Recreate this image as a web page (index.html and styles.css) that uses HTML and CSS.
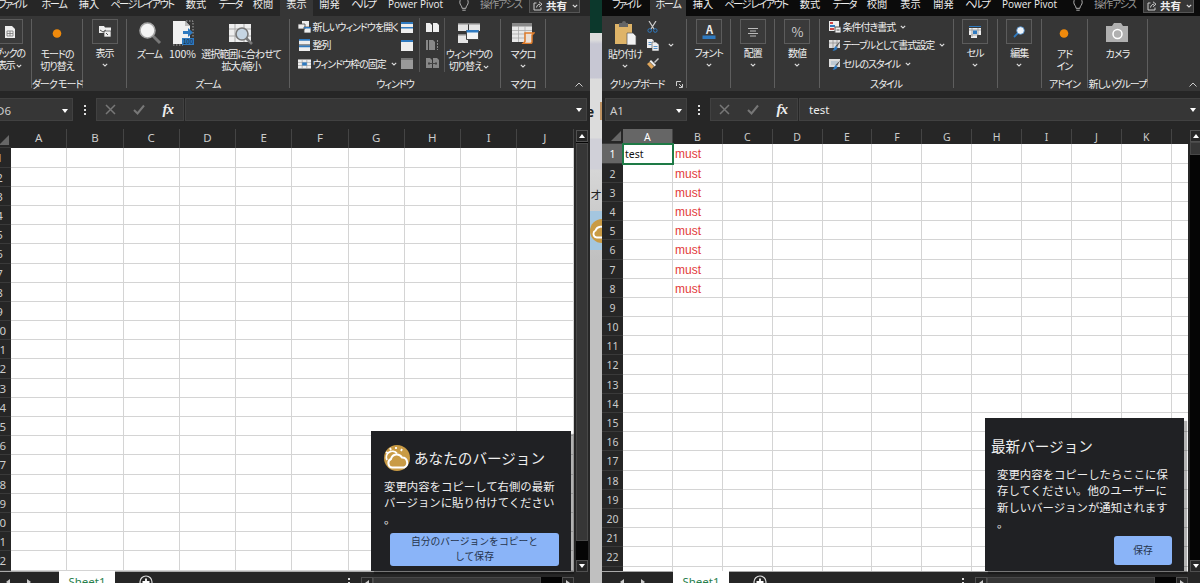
FILE: index.html
```html
<!DOCTYPE html>
<html lang="ja">

<head>
    <meta charset="UTF-8">
    <title>バージョンの比較</title>
    <link rel="stylesheet" href="styles.css">
    <script src="script.js"></script>
</head>

<body>
    <svg class="defs">
        <symbol id="chev" viewBox="0 0 6 4"><path d="M.8.8 3 3 5.2.8" fill="none" stroke="#ddd" stroke-width="1.1"/></symbol>
        <symbol id="bulb" viewBox="0 0 12 16"><path d="M4 11C4 8.500 1.500 7.500 1.500 4.500a4.500 4.500 0 0 1 9 0C10.500 7.500 8 8.500 8 11zM4.200 13h3.600" fill="none" stroke="#bbb"/></symbol>
        <symbol id="share" viewBox="0 0 10 10"><path d="M3.500 2H1v7h7V6.500M3.500 6.500C4 4 5.500 3.200 7 3.200M6 .8l3 2.400-3 2.500" fill="none" stroke="#ccc"/></symbol>
        <symbol id="dot" viewBox="0 0 24 24"><circle cx="12" cy="12.500" r="4.300" fill="#ef8a0c"/></symbol>
        <symbol id="cells" viewBox="0 0 14 10"><path fill="#eee" d="M0 0h14v10H0z"/><path d="M0 3.300h14M0 6.600h14M4.500 0v10M9.500 0v10" stroke="#9a9a9a" stroke-width=".7"/></symbol>
    </svg>

    <div class="backdrop">
        <div class="strip-green"></div>
        <div class="strip-text strip-e">e<i></i></div>
        <div class="strip-text strip-o">オ</div>
        <div class="strip-item">
            <svg width="24" height="24" viewBox="0 0 26 26"><circle cx="13" cy="13" r="13" fill="#c99b45"/><path d="M7 20a4 4 0 0 1-1-7.500 6 6 0 0 1 11-1 5 5 0 0 1 3 8.500z" fill="#c99b45" stroke="#fff" stroke-width="2"/></svg>
        </div>
    </div>

    <!-- 左のウィンドウ -->
    <div class="window window-left">
        <div class="tabs">
            <span>ファイル</span><span>ホーム</span><span>挿入</span><span>ページ レイアウト</span><span>数式</span><span>データ</span><span>校閲</span><span class="active">表示</span><span>開発</span><span>ヘルプ</span><span class="latin">Power Pivot</span>
            <span><svg width="12" height="15"><use href="#bulb"/></svg></span><span class="assist">操作アシス</span>
            <div class="share"><svg width="10" height="10"><use href="#share"/></svg><b>共有</b><svg class="chev"><use href="#chev"/></svg></div>
        </div>
        <div class="ribbon">
            <div class="group g-book">
                <div class="body"><div class="big boxed">
                    <div class="icon"><svg width="12" height="14" viewBox="0 0 12 14"><path d="M1 1h7l3 3v9H1z" fill="#eee"/><path d="M3 6h6v5H3zM3 8.500h6M6 6v5" fill="none" stroke="#777" stroke-width=".8"/></svg></div>
                    <span>ブックの<br>表示 <svg class="chev"><use href="#chev"/></svg></span>
                </div></div>
            </div>
            <div class="group g-dark">
                <div class="body"><div class="big">
                    <div class="icon"><svg width="24" height="24"><use href="#dot"/></svg></div>
                    <span>モードの<br>切り替え</span>
                </div></div>
                <div class="caption">ダーク モード</div>
            </div>
            <div class="group g-show">
                <div class="body"><div class="big boxed">
                    <div class="icon"><svg width="14" height="13" viewBox="0 0 14 13"><path d="M1 1h5l1 1.500h6V6H9v2H1z" fill="#eee"/><path d="M6 6h7v6H6z" fill="#eee" stroke="#444" stroke-width=".7"/><path d="m2 5 3 2 3-2M8 8l2 2" fill="none" stroke="#555"/></svg></div>
                    <span>表示</span><svg class="chev"><use href="#chev"/></svg>
                </div></div>
            </div>
            <div class="group g-zoom">
                <div class="body">
                    <div class="big b-zoom">
                        <div class="icon"><svg width="24" height="24" viewBox="0 0 24 24"><path d="m15 15 7 7" stroke="#777" stroke-width="3"/><circle cx="9.500" cy="9.500" r="7.500" fill="#f4f4f4" stroke="#a5a5a5" stroke-width="1.600"/></svg></div>
                        <span>ズーム</span>
                    </div>
                    <div class="big b-full">
                        <div class="icon"><svg width="24" height="26" viewBox="0 0 24 26"><path d="M2 1h12l5 5v18H2z" fill="#f1f1f1"/><path d="M14 1v5h5" fill="#bbb"/><path d="M15 1h7v17M2 25h10" fill="none" stroke="#aaa" stroke-dasharray="1.500 1.500"/><path d="M12 11h5V8l5 4.500-5 4.500v-3h-5zM11 18h12v7H11z" fill="#2f7ac0"/><text x="12" y="24" font-size="6" letter-spacing="0" fill="#123">100</text></svg></div>
                        <span class="pct">100%</span>
                    </div>
                    <div class="big b-fit">
                        <div class="icon"><svg width="26" height="24" viewBox="0 0 26 24"><path d="M1 3h22v18H1z" fill="#eee"/><path d="M1 8h22M1 15h22M7 3v18M16 3v18" stroke="#aaa"/><path d="m18 17 6 6" stroke="#777" stroke-width="2.600"/><circle cx="14" cy="13" r="6" fill="#c6d5e2" stroke="#777" stroke-width="1.600"/></svg></div>
                        <span>選択範囲に合わせて<br>拡大/縮小</span>
                    </div>
                </div>
                <div class="caption">ズーム</div>
            </div>
            <div class="group g-window">
                <div class="body">
                    <div class="list l-window">
                        <div><svg width="13" height="12" viewBox="0 0 13 12"><path d="M4 0h7v6H4z" fill="#eee"/><path d="M0 3h7v5H0zM6 6h7v6H6z" fill="#eee" stroke="#444" stroke-width=".8"/><path d="M6 6h7v1.500H6z" fill="#2f7ac0"/></svg>新しいウィンドウを開く</div>
                        <div><svg width="13" height="12" viewBox="0 0 13 12"><path d="M1 0h11v5.500H1zM1 6.500h11V12H1z" fill="#eee"/><path d="M1 0h11v1.700H1zM1 6.500h11v1.700H1z" fill="#2f7ac0"/></svg>整列</div>
                        <div><svg width="13" height="12" viewBox="0 0 14 10"><use href="#cells"/><path d="M4.500 3.300h5v3.300h-5z" fill="#2f7ac0"/></svg>ウィンドウ枠の固定 <svg class="chev"><use href="#chev"/></svg></div>
                    </div>
                    <div class="list l-split">
                        <div><svg width="12" height="11"><path d="M0 0h12v11H0z" fill="#eee"/><path d="M0 0h12v2H0zM0 5h12v1.500H0z" fill="#2f7ac0"/></svg></div>
                        <div><svg width="12" height="11"><path d="M0 0h12v11H0z" fill="#eee"/><path d="M0 0h12v2H0z" fill="#2f7ac0"/></svg></div>
                        <div><svg width="12" height="11"><path d="M0 0h12v11H0z" fill="#999"/><path d="M0 0h12v2H0z" fill="#777"/></svg></div>
                    </div>
                    <div class="list l-side">
                        <div><svg width="13" height="10"><path d="M0 1h4l2 2v7H0zM7 1h4l2 2v7H7z" fill="#eee"/></svg></div>
                        <div><svg width="13" height="12"><path d="M0 1h2v10H0zM3 1h4l2 2v8H3z" fill="#888"/><path d="M11.500 1v10" stroke="#888" stroke-dasharray="2 1"/></svg></div>
                        <div><svg width="13" height="10"><path d="M0 0h4l2 2v8H0zM7 0h4l2 2v8H7z" fill="#888"/><path d="M2 5.500h9M3 4v3M10 4v3" stroke="#444"/></svg></div>
                    </div>
                    <div class="big b-switch">
                        <div class="icon"><svg width="24" height="22" viewBox="0 0 24 22"><path d="M1 1h10v8H1zM12 1h11v8H12zM1 12h10v9H1z" fill="#e5e5e5"/><path d="M1 1h22v1.500H1zM1 12h9v1.500H1z" fill="#888"/><path d="M9.500 8.500h12v9h-12z" fill="#f3f3f3" stroke="#444"/><path d="M9.500 8h12v2.500h-12z" fill="#2f7ac0"/></svg></div>
                        <span>ウィンドウの<br>切り替え <svg class="chev"><use href="#chev"/></svg></span>
                    </div>
                </div>
                <div class="caption">ウィンドウ</div>
            </div>
            <div class="group g-macro">
                <div class="body"><div class="big">
                    <div class="icon"><svg width="24" height="22" viewBox="0 0 24 22"><path d="M1 1h20v19H1z" fill="#e8e8e8"/><path d="M1 1h20v3.500H1z" fill="#888"/><path d="M1 8.500h20M1 12h20M1 16h20M7.500 4v16M14 4v16" stroke="#aaa" stroke-width=".8"/><path d="M14 11h9l-2 2v7c0 1-1 1.500-2 1.500h-7l2-2z" fill="#eadfd5" stroke="#e07b28" stroke-width="1.500"/></svg></div>
                    <span>マクロ</span><svg class="chev"><use href="#chev"/></svg>
                </div></div>
                <div class="caption">マクロ</div>
            </div>
            <svg class="collapse" viewBox="0 0 8 5"><path d="M.5 4.500 4 1l3.500 3.500" fill="none" stroke="#ccc"/></svg>
        </div>
        <div class="formula">
            <div class="namebox"><span class="ref">D6</span><i class="caret"></i></div>
            <div class="dots"><i></i><i></i><i></i></div>
            <div class="buttons">
                <svg width="11" height="11"><path d="m1 1 9 9M10 1l-9 9" stroke="#777" stroke-width="1.500"/></svg>
                <svg width="12" height="11"><path d="m1 6 3.500 3.500L11 1.500" fill="none" stroke="#777" stroke-width="2"/></svg>
                <em>fx</em>
            </div>
            <div class="input"><span></span><i class="caret"></i></div>
        </div>
        <div class="main">
            <div class="sheet" data-cols="ABCDEFGHIJ" data-rows="22"></div>
            <div class="vscroll">
                <div class="arrow"><i class="up"></i></div><div class="thumb"></div><div class="track"></div><div class="arrow"><i class="down"></i></div>
            </div>
        </div>
        <div class="bottom">
            <i class="prev"></i><i class="next"></i>
            <div class="sheet-tab">Sheet1</div>
            <svg class="add" viewBox="0 0 14 14"><circle cx="7" cy="7" r="6" fill="none" stroke="#ddd" stroke-width="1.200"/><path d="M7 3.500v7M3.500 7h7" stroke="#fff" stroke-width="1.800"/></svg>
            <div class="dots"><i></i><i></i><i></i></div>
            <div class="hscroll"><div class="arrow"><i class="prev"></i></div><div class="thumb"></div><div class="track"></div><div class="arrow"><i class="next"></i></div></div>
        </div>
    </div>

    <!-- 右のウィンドウ -->
    <div class="window window-right">
        <div class="tabs">
            <span>ファイル</span><span class="active">ホーム</span><span>挿入</span><span>ページ レイアウト</span><span>数式</span><span>データ</span><span>校閲</span><span>表示</span><span>開発</span><span>ヘルプ</span><span class="latin">Power Pivot</span>
            <span><svg width="12" height="15"><use href="#bulb"/></svg></span><span class="assist">操作アシス</span>
            <div class="share"><svg width="10" height="10"><use href="#share"/></svg><b>共有</b><svg class="chev"><use href="#chev"/></svg></div>
        </div>
        <div class="ribbon">
            <div class="group g-clip">
                <div class="body">
                    <div class="big b-paste">
                        <div class="icon"><svg width="23" height="24" viewBox="0 0 23 24"><path d="M1 3h17v20H1z" fill="#dfb468"/><path d="M5 2h3a2 2 0 0 1 4 0h2v4H5z" fill="#666"/><path d="M13 12h6l3 3v9h-9z" fill="#f2f2f2" stroke="#555" stroke-width=".7"/></svg></div>
                        <span>貼り付け</span><svg class="chev"><use href="#chev"/></svg>
                    </div>
                    <div class="list l-clip">
                        <div><svg width="11" height="12" viewBox="0 0 11 12"><path d="M2 0l5 8M9 0 4 8" stroke="#ccc" stroke-width="1.200"/><circle cx="2.700" cy="9.500" r="1.800" fill="none" stroke="#2f7ac0"/><circle cx="8.300" cy="9.500" r="1.800" fill="none" stroke="#2f7ac0"/></svg></div>
                        <div><svg width="12" height="12" viewBox="0 0 12 12"><path d="M0 0h5l2 2v7H0z" fill="#eee"/><path d="M5 3h4l3 2.500V12H5z" fill="#eee" stroke="#444" stroke-width=".6"/><path d="M1.500 3.500h3M1.500 5.500h3M6.500 7.500h4M6.500 9.500h4" stroke="#2f7ac0" stroke-width=".8"/></svg></div>
                        <div><svg width="12" height="11" viewBox="0 0 12 11"><path d="m7 4 4-4 1 1-4 4z" fill="#ccc"/><path d="m4 2 5 5-1.500 1.500-5-5z" fill="#eee"/><path d="m2.500 4 4.500 4.500L4.500 11 0 6z" fill="#dfa65b"/></svg></div>
                    </div>
                    <svg class="chev clip-chev"><use href="#chev"/></svg>
                </div>
                <div class="caption">クリップボード</div>
                <svg class="launcher" viewBox="0 0 7 7"><path d="M.5 5V.5H5M3 3l3 3M6.500 3v3.500H3" fill="none" stroke="#ccc"/></svg>
            </div>
            <div class="group g-44">
                <div class="body"><div class="big boxed">
                    <div class="icon"><svg width="14" height="14" viewBox="0 0 14 14"><text x="7" y="9" text-anchor="middle" font-size="11" font-weight="bold" fill="#eee">A</text><path d="M.5 10.500h13V14H.5z" fill="#2f7ac0"/></svg></div>
                    <span>フォント</span><svg class="chev"><use href="#chev"/></svg>
                </div></div>
            </div>
            <div class="group g-44">
                <div class="body"><div class="big boxed">
                    <div class="icon"><svg width="12" height="10"><path d="M1 1.500h10M3 4h6M1 6.500h10M3 9h6" stroke="#bbb"/></svg></div>
                    <span>配置</span><svg class="chev"><use href="#chev"/></svg>
                </div></div>
            </div>
            <div class="group g-44">
                <div class="body"><div class="big boxed">
                    <div class="icon percent">%</div>
                    <span>数値</span><svg class="chev"><use href="#chev"/></svg>
                </div></div>
            </div>
            <div class="group g-style">
                <div class="body">
                    <div class="list l-style">
                        <div><svg width="12" height="12" viewBox="0 0 12 12"><path d="M0 0h10v10H0z" fill="#eee"/><path d="M1 1h3v2H1zM1 7h4v2H1z" fill="#d04545"/><path d="M1 4h5v2H1z" fill="#2f7ac0"/><path d="M6 6h6v6H6z" fill="#eee" stroke="#555"/><path d="M7.500 9h3" stroke="#555"/></svg>条件付き書式 <svg class="chev"><use href="#chev"/></svg></div>
                        <div><svg width="12" height="12" viewBox="0 0 12 12"><path d="M0 1h11v8H0z" fill="#ddd"/><path d="M0 4h11M4 1v8M8 1v8" stroke="#888" stroke-width=".7"/><path d="m11.500 2-5 5 1.500 1z" fill="#555"/><path d="m6.500 7 2 2c-1 2.500-3 3-5 2.500C5.500 10.500 5 8 6.500 7z" fill="#2f7ac0"/></svg>テーブルとして書式設定 <svg class="chev"><use href="#chev"/></svg></div>
                        <div><svg width="12" height="12" viewBox="0 0 12 12"><path d="M0 1h11v8H0z" fill="#ddd"/><path d="M2 3h7v4H2z" fill="#bcc8d2"/><path d="m11.500 2-5 5 1.500 1z" fill="#555"/><path d="m6.500 7 2 2c-1 2.500-3 3-5 2.500C5.500 10.500 5 8 6.500 7z" fill="#2f7ac0"/></svg>セルのスタイル <svg class="chev"><use href="#chev"/></svg></div>
                    </div>
                </div>
                <div class="caption">スタイル</div>
            </div>
            <div class="group g-44">
                <div class="body"><div class="big boxed">
                    <div class="icon"><svg width="12" height="12" viewBox="0 0 12 12"><path d="M0 .5h12" stroke="#2f7ac0"/><path d="M0 2h12v7H8v3H2V9H0z" fill="#eee"/><path d="M0 4h12M3 2v9M9 2v7M2 9h7" stroke="#888" stroke-width=".7"/><path d="M4 4.500h4v3.500H4z" fill="#2f7ac0"/></svg></div>
                    <span>セル</span><svg class="chev"><use href="#chev"/></svg>
                </div></div>
            </div>
            <div class="group g-44">
                <div class="body"><div class="big boxed">
                    <div class="icon"><svg width="12" height="12" viewBox="0 0 12 12"><path d="M5 7 1 11" stroke="#2f7ac0" stroke-width="1.800"/><circle cx="7.500" cy="4.500" r="3.800" fill="#eef4fa" stroke="#4b8ed0" stroke-width=".8"/></svg></div>
                    <span>編集</span><svg class="chev"><use href="#chev"/></svg>
                </div></div>
            </div>
            <div class="group g-addin">
                <div class="body"><div class="big">
                    <div class="icon"><svg width="24" height="24"><use href="#dot"/></svg></div>
                    <span>アド<br>イン</span>
                </div></div>
                <div class="caption">アドイン</div>
            </div>
            <div class="group g-camera">
                <div class="body"><div class="big">
                    <div class="icon"><svg width="24" height="20" viewBox="0 0 24 20"><path d="M1 3h6l2-3h7l2 3h5v16H1z" fill="#b0b0b0"/><circle cx="12.500" cy="11" r="4.500" fill="none" stroke="#fff" stroke-width="1.500"/></svg></div>
                    <span>カメラ</span>
                </div></div>
                <div class="caption">新しいグループ</div>
            </div>
            <svg class="collapse" viewBox="0 0 8 5"><path d="M.5 4.500 4 1l3.500 3.500" fill="none" stroke="#ccc"/></svg>
        </div>
        <div class="formula">
            <div class="namebox"><span class="ref">A1</span><i class="caret"></i></div>
            <div class="dots"><i></i><i></i><i></i></div>
            <div class="buttons">
                <svg width="11" height="11"><path d="m1 1 9 9M10 1l-9 9" stroke="#777" stroke-width="1.500"/></svg>
                <svg width="12" height="11"><path d="m1 6 3.500 3.500L11 1.500" fill="none" stroke="#777" stroke-width="2"/></svg>
                <em>fx</em>
            </div>
            <div class="input"><span>test</span><i class="caret"></i></div>
        </div>
        <div class="main">
            <div class="sheet" data-cols="ABCDEFGHIJK" data-rows="22" data-must="8"></div>
            <div class="vscroll">
                <div class="arrow"><i class="up"></i></div><div class="thumb"></div><div class="track"></div><div class="arrow"><i class="down"></i></div>
            </div>
        </div>
        <div class="bottom">
            <i class="prev"></i><i class="next"></i>
            <div class="sheet-tab">Sheet1</div>
            <svg class="add" viewBox="0 0 14 14"><circle cx="7" cy="7" r="6" fill="none" stroke="#ddd" stroke-width="1.200"/><path d="M7 3.500v7M3.500 7h7" stroke="#fff" stroke-width="1.800"/></svg>
            <div class="dots"><i></i><i></i><i></i></div>
            <div class="hscroll"><div class="arrow"><i class="prev"></i></div><div class="thumb"></div><div class="track"></div><div class="arrow"><i class="next"></i></div></div>
        </div>
    </div>

    <div class="dialog dialog-mine">
        <h2>
            <svg width="26" height="26" viewBox="0 0 26 26"><circle cx="13" cy="13" r="13" fill="#c99b45"/><path d="M3 15A6 6 0 0 1 13 8.500M3.500 8 2 7M7 5 6 3M12 4V2M17 6l1-2" fill="none" stroke="#fff" stroke-width="1.800"/><path d="M8 22.500a4.500 4.500 0 0 1-1-8.500 6 6 0 0 1 11-1.500 5.200 5.200 0 0 1 2 10z" fill="#c99b45" stroke="#fff" stroke-width="2"/></svg>
            あなたのバージョン
        </h2>
        <p>変更内容をコピーして右側の最新<br>バージョンに貼り付けてください<br>。</p>
        <button>自分のバージョンをコピーと<br>して保存</button>
    </div>

    <div class="dialog dialog-latest">
        <h2>最新バージョン</h2>
        <p>変更内容をコピーしたらここに保<br>存してください。他のユーザーに<br>新しいバージョンが通知されます<br>。</p>
        <button>保存</button>
    </div>
</body>

</html>
```
FILE: script.js
```js
function makeDiv(className, text) {
    const el = document.createElement("div");
    el.className = className;
    el.textContent = text || "";
    return el;
}

function buildSheet(sheet) {
    const cols = sheet.dataset.cols.split("");
    const rows = Number(sheet.dataset.rows);
    const must = Number(sheet.dataset.must || 0);

    const head = makeDiv("row head");
    head.appendChild(makeDiv("corner"));
    cols.forEach(c => head.appendChild(makeDiv("cell", c)));
    head.appendChild(makeDiv("cell rest"));
    sheet.appendChild(head);

    // 最後の行は下端で切れる
    for (let r = 1; r <= rows + 1; r++) {
        const row = makeDiv("row");
        row.appendChild(makeDiv("num", r <= rows ? String(r) : ""));
        cols.forEach((c, i) => {
            const cell = makeDiv("cell");
            if (i === 1 && r <= must) {
                cell.textContent = "must";
                cell.classList.add("must");
            }
            if (i === 0 && r === 1 && must) {
                cell.textContent = "test";
                cell.classList.add("selected");
            }
            row.appendChild(cell);
        });
        row.appendChild(makeDiv("cell rest"));
        sheet.appendChild(row);
    }
}

document.addEventListener("DOMContentLoaded", function () {
    document.querySelectorAll(".sheet").forEach(buildSheet);
});
```
FILE: styles.css
```css
* {
    box-sizing: border-box;
}

body {
    margin: 0;
    height: 583px;
    position: relative;
    overflow: hidden;
    background: #c9c9c9;
    font-family: "Noto Sans CJK JP", sans-serif;
    font-size: 10px;
    color: #eee;
}

svg {
    display: block;
    flex: none;
}

.defs {
    position: absolute;
    width: 0;
    height: 0;
}

/* 背面のウィンドウ */
.backdrop {
    position: absolute;
    left: 590px;
    top: 0;
    width: 12px;
    height: 583px;
    overflow: hidden;
    background: linear-gradient(#dcdcdc 40px, #c7c7d3 44px, #c7c7d3 78px, #dcdcdc 79px, #dcdcdc 138px, #d0d0d8 139px, #d0d0d8 169px, #d6d6d6 170px, #c0c0c0 260px);
    color: #222;
}

.strip-green {
    height: 33px;
    background: #0c382c;
}

.strip-text {
    height: 18px;
    font-size: 14px;
    line-height: 18px;
}

.strip-e {
    margin: 69px 0 0 -4px;
    font-weight: bold;
    display: flex;
    justify-content: space-between;
}

.strip-e i {
    width: 2px;
    background: #bd9263;
}

.strip-o {
    margin-top: 66px;
    font-size: 12px;
}

.strip-item {
    margin-top: 7px;
    height: 39px;
    padding-top: 8px;
    background: #a4c6df;
}

/* ウィンドウ */
.window {
    position: absolute;
    top: 0;
    height: 583px;
    overflow: hidden;
    display: flex;
    flex-direction: column;
    background: #262626;
}

.window-left {
    left: -12px;
    width: 602px;
}

.window-right {
    left: 602px;
    width: 602px;
}

.chev {
    width: 6px;
    height: 4px;
    display: inline-block;
    vertical-align: middle;
}

.tabs {
    display: flex;
    flex: none;
    height: 16px;
    font-size: 10.2px;
    line-height: 12px;
    font-feature-settings: "palt";
    white-space: nowrap;
}

.tabs > span {
    display: flex;
    justify-content: center;
    height: 16px;
    margin-top: -2px;
    flex: none;
}

.tabs > .active {
    background: #363636;
    height: 18px;
}

.window-right .tabs {
    background: #0b0b0b;
}

.tabs span:nth-child(1) { width: 48px; letter-spacing: -1.8px; }
.tabs span:nth-child(2) { width: 36px; letter-spacing: -1.3px; }
.tabs span:nth-child(3) { width: 34px; }
.tabs span:nth-child(4) { width: 72px; letter-spacing: -1.5px; }
.tabs span:nth-child(5) { width: 36px; }
.tabs span:nth-child(6) { width: 32px; letter-spacing: -1.8px; }
.tabs span:nth-child(7) { width: 34px; }
.tabs span:nth-child(8) { width: 33px; }
.tabs span:nth-child(9) { width: 33px; }
.tabs span:nth-child(10) { width: 34px; letter-spacing: -1.8px; }
.tabs span:nth-child(11) { width: 71px; }
.tabs span:nth-child(12) { width: 26px; }

.tabs .latin {
    font-family: "Open Sans", sans-serif;
    font-size: 10px;
}

.tabs .assist {
    width: 43px;
    margin-right: 9px;
    padding-left: 3px;
    justify-content: flex-start;
    letter-spacing: -1.3px;
    color: #999;
}

.share {
    display: flex;
    align-items: center;
    gap: 3px;
    width: 51px;
    height: 15px;
    margin-top: -2px;
    padding-left: 3px;
    background: #363636;
    border: 1px solid #555;
}

.share b {
    font-size: 10.5px;
}

.share .chev {
    margin-left: 2px;
}

/* リボン */
.ribbon {
    display: flex;
    flex: none;
    position: relative;
    height: 75px;
    padding: 3px 0 3px;
    background: #363636;
    font-size: 10px;
    line-height: 12px;
    font-feature-settings: "palt";
    letter-spacing: -1px;
    white-space: nowrap;
}

.group {
    position: relative;
    display: flex;
    flex-direction: column;
    flex: none;
    border-right: 1px solid #5e5e5e;
}

.body {
    display: flex;
    justify-content: center;
    height: 59px;
}

.caption {
    display: flex;
    justify-content: center;
    height: 10px;
    line-height: 12px;
}

.big {
    display: flex;
    flex-direction: column;
    align-items: center;
    text-align: center;
}

.big .icon {
    display: flex;
    align-items: center;
    justify-content: center;
    height: 27px;
    margin-bottom: 2px;
}

.big > .chev {
    margin-top: 4px;
}

.boxed .icon {
    width: 26px;
    height: 25px;
    margin-bottom: 3px;
    border: 1px solid #5c5c5c;
    background: #3a3a3a;
}

.percent {
    font-size: 13px;
    color: #ccc;
}

.pct {
    font-size: 10.5px;
    letter-spacing: -0.1px;
}

.g-book { width: 44px; }
.g-dark { width: 51px; }
.g-show { width: 44px; }
.g-zoom { width: 163px; }
.g-window { width: 211px; }
.g-macro { width: 45px; }
.g-clip { width: 85px; }
.g-44 { width: 44.2px; }
.g-style { width: 134px; }
.g-addin { width: 46px; }
.g-camera { width: 60px; }

.b-zoom { width: 32px; }
.b-full { width: 34px; }
.b-fit { width: 83px; }
.b-switch { width: 49px; }
.b-paste { width: 40px; }

.list {
    display: flex;
    flex-direction: column;
    margin-top: -1px;
}

.list > div {
    display: flex;
    align-items: center;
    gap: 2px;
    height: 18.3px;
}

.list .chev {
    margin-left: 3px;
}

.l-window {
    width: 104px;
    padding-left: 1px;
}

.l-split {
    width: 19px;
    border-right: 1px solid #555;
}

.l-side {
    width: 25px;
    padding-left: 6px;
    border-right: 1px solid #555;
}

.l-split,
.l-side {
    height: 54px;
}

.l-clip {
    width: 20px;
    padding-left: 2px;
}

.clip-chev {
    margin: 24px 0 0 3px;
}

.g-clip .body {
    justify-content: flex-start;
    padding-left: 3px;
}

.g-clip .caption {
    padding-right: 14px;
}

.launcher {
    position: absolute;
    right: 3px;
    bottom: 0;
    width: 7px;
    height: 7px;
}

.g-style .body {
    justify-content: flex-start;
    padding-left: 9px;
}

.collapse {
    position: absolute;
    left: 587px;
    bottom: 4px;
    width: 8px;
    height: 5px;
}

/* 数式バー */
.formula {
    display: flex;
    flex: none;
    height: 38px;
    padding: 7px 0 8px 3px;
    font-size: 11.5px;
}

.namebox,
.buttons,
.input {
    display: flex;
    align-items: center;
    background: #363636;
    border: 1px solid #414141;
}

.namebox {
    width: 82px;
    justify-content: space-between;
    padding: 2px 4px 0;
    font-family: "Noto Sans", sans-serif;
}

.ref {
    color: #ccc;
}

.caret {
    border: 3px solid transparent;
    border-top: 4px solid #fff;
    border-bottom: 0;
}

.dots {
    display: flex;
    flex-direction: column;
    align-items: center;
    justify-content: center;
    gap: 2px;
    width: 23px;
}

.dots i {
    width: 2px;
    height: 2px;
    background: #ddd;
}

.buttons {
    width: 88px;
    justify-content: space-between;
    padding: 0 10px 0 8px;
}

.buttons em {
    font-family: "Liberation Serif", serif;
    font-size: 15px;
    font-weight: bold;
    letter-spacing: -1px;
}

.input {
    flex: none;
    width: 402px;
    margin-left: 1px;
    padding: 0 4px 0 9px;
    justify-content: space-between;
    font-family: "Noto Sans", sans-serif;
}

/* シート */
.main {
    display: flex;
    flex: none;
    height: 443px;
}

.sheet {
    width: 586px;
    overflow: hidden;
    background: #fff;
    border-bottom: 1px solid #aaa;
    font-family: "Noto Sans", sans-serif;
}

.row {
    display: flex;
    height: 19.2px;
    line-height: 19px;
}

.cell {
    flex: none;
    border-right: 1px solid #d4d4d4;
    border-bottom: 1px solid #d4d4d4;
}

.rest {
    flex: 1;
    border-right: 0;
}

.num,
.corner {
    flex: none;
    width: 21px;
    background: #262626;
    color: #ccc;
    text-align: center;
    border-bottom: 1px solid #3a3a3a;
}

.corner {
    display: flex;
    align-items: flex-end;
    justify-content: flex-end;
    padding: 2px;
}

.corner::after {
    content: "";
    border-left: 10px solid transparent;
    border-bottom: 10px solid #666;
}

.head {
    background: #262626;
    color: #ccc;
    text-align: center;
}

.head .cell {
    border-bottom: 0;
    border-right-color: #444;
}

.window-left .num,
.window-left .corner { width: 23px; }
.window-left .cell { width: 56.25px; }
.window-left .head { height: 19.4px; line-height: 18px; }
.window-left .sheet { font-size: 11.5px; }

.window-right .cell { width: 49.9px; }
.window-right .head { height: 15.4px; line-height: 16px; }
.window-right .sheet { font-size: 10.5px; }

.window-right .num {
    line-height: 20px;
}

.window-left .rest,
.window-right .rest {
    width: auto;
}

.window-right .head .cell:nth-child(2),
.window-right .row:nth-child(2) .num {
    background: #666;
    color: #fff;
}

.window-right .must {
    padding-left: 2px;
    font-family: "Liberation Sans", sans-serif;
    font-size: 12px;
    line-height: 20px;
    letter-spacing: 0.1px;
    color: #e23b3b;
}

.selected {
    padding-left: 2px;
    outline: 2px solid #1e7a46;
    outline-offset: -1px;
    line-height: 20px;
    color: #111;
    z-index: 1;
}

.vscroll {
    display: flex;
    flex-direction: column;
    width: 12px;
    margin: 1px 0 0 2px;
    background: #050505;
}

.arrow {
    display: flex;
    flex: none;
    align-items: center;
    justify-content: center;
    width: 12px;
    height: 12px;
    background: #262626;
    border: 1px solid #505050;
}

.thumb {
    background: #363636;
    border: 1px solid #484848;
}

.track {
    flex: 1;
}

.window-left .vscroll .thumb { height: 398px; margin-top: 1px; }
.window-right .vscroll .thumb { height: 13px; }

.up,
.down {
    border: 3.5px solid transparent;
    border-bottom: 4px solid #fff;
    border-top: 0;
}

.down {
    border-top: 4px solid #fff;
    border-bottom: 0;
}

.prev,
.next {
    border: 3.5px solid transparent;
    border-right: 4px solid #ccc;
    border-left: 0;
}

.next {
    border-left: 4px solid #ccc;
    border-right: 0;
}

.bottom {
    display: flex;
    flex: none;
    align-items: flex-start;
    height: 20px;
}

.bottom > .prev { margin: 7px 0 0 18px; }
.bottom > .next { margin: 7px 0 0 17px; }

.sheet-tab {
    width: 56px;
    height: 20px;
    margin: -1px 0 0 28px;
    background: #fff;
    color: #28804d;
    font-family: "Noto Sans", sans-serif;
    font-size: 11.5px;
    line-height: 21px;
    text-align: center;
}

.add {
    width: 14px;
    height: 14px;
    margin: 3px 0 0 24px;
}

.bottom .dots {
    height: 22px;
    margin-left: 184px;
}

.hscroll {
    display: flex;
    width: 213px;
    margin: 5px 0 0 1px;
    background: #050505;
}

.hscroll .thumb {
    width: 168px;
}

/* ダイアログ */
.dialog {
    position: absolute;
    background: #202124;
    box-shadow: 3px 3px 1px rgba(0, 0, 0, .3);
    color: #eee;
    font-size: 11.4px;
    line-height: 16.3px;
    white-space: nowrap;
}

.dialog h2 {
    display: flex;
    align-items: center;
    gap: 4px;
    margin: 0;
    height: 26px;
    font-size: 14.6px;
    font-weight: normal;
}

.dialog p {
    margin: 0;
}

.dialog button {
    display: block;
    padding: 0;
    border: 0;
    border-radius: 3px;
    background: #8ab4f8;
    color: #26344d;
    font-family: inherit;
    font-size: 9.8px;
    line-height: 15.5px;
}

.dialog-mine {
    left: 371px;
    top: 431px;
    width: 200px;
    height: 140px;
    padding: 14px 12px 0 13px;
}

.dialog-mine p {
    margin-top: 7px;
}

.dialog-mine button {
    width: 169px;
    height: 33px;
    margin: 6px 0 0 6px;
}

.dialog-latest {
    left: 985px;
    top: 418px;
    width: 199px;
    height: 153px;
    padding: 15px 12px 0 6px;
}

.dialog-latest p {
    margin: 7px 0 0 6px;
}

.dialog-latest button {
    width: 58px;
    height: 29px;
    margin: 5px 0 0 auto;
}
```
